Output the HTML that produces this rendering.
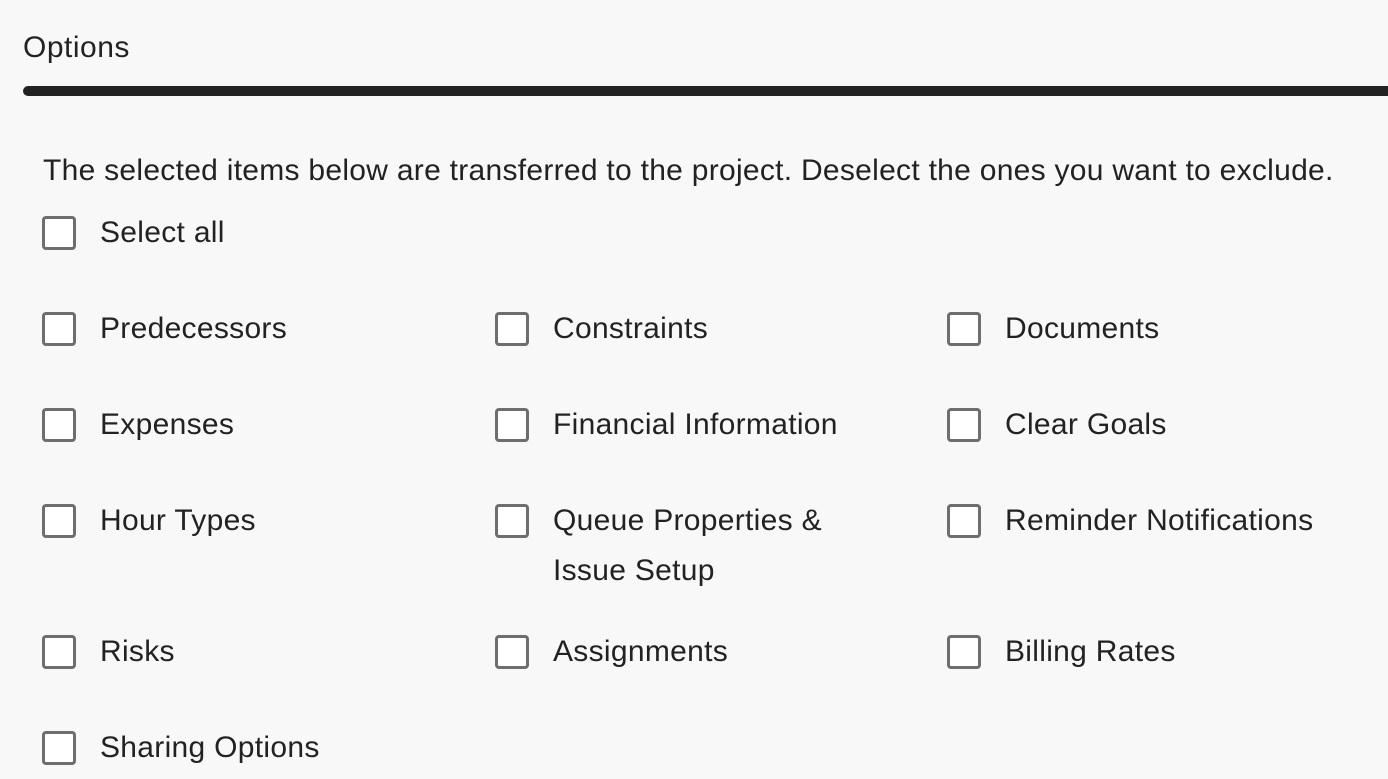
<!DOCTYPE html>
<html><head><style>
body{margin:0;width:1388px;height:779px;background:#f8f8f8;font-family:"Liberation Sans",sans-serif;color:#222;overflow:hidden;position:relative}
.t{position:absolute;font-size:30px;line-height:50px;white-space:nowrap;letter-spacing:0.3px;margin-top:1px}
.cb{position:absolute;width:28px;height:28px;border:3px solid #6e6e6e;border-radius:4px;background:#fff;box-sizing:content-box}
.bar{position:absolute;left:23px;top:86px;width:1400px;height:10px;background:#222;border-radius:5px}
</style></head><body>
<div class="t" style="left:23px;top:22px;font-size:30px;letter-spacing:0.5px">Options</div>
<div class="bar"></div>
<div class="t" style="left:43px;top:145px;letter-spacing:0.28px">The selected items below are transferred to the project. Deselect the ones you want to exclude.</div>

<div class="cb" style="left:42px;top:216px"></div><div class="t" style="left:100px;top:207px">Select all</div>

<div class="cb" style="left:42px;top:312px"></div><div class="t" style="left:100px;top:303px">Predecessors</div>
<div class="cb" style="left:495px;top:312px"></div><div class="t" style="left:553px;top:303px">Constraints</div>
<div class="cb" style="left:947px;top:312px"></div><div class="t" style="left:1005px;top:303px">Documents</div>

<div class="cb" style="left:42px;top:408px"></div><div class="t" style="left:100px;top:399px">Expenses</div>
<div class="cb" style="left:495px;top:408px"></div><div class="t" style="left:553px;top:399px">Financial Information</div>
<div class="cb" style="left:947px;top:408px"></div><div class="t" style="left:1005px;top:399px">Clear Goals</div>

<div class="cb" style="left:42px;top:504px"></div><div class="t" style="left:100px;top:495px">Hour Types</div>
<div class="cb" style="left:495px;top:504px"></div><div class="t" style="left:553px;top:495px">Queue Properties &amp;<br>Issue Setup</div>
<div class="cb" style="left:947px;top:504px"></div><div class="t" style="left:1005px;top:495px">Reminder Notifications</div>

<div class="cb" style="left:42px;top:635px"></div><div class="t" style="left:100px;top:626px">Risks</div>
<div class="cb" style="left:495px;top:635px"></div><div class="t" style="left:553px;top:626px">Assignments</div>
<div class="cb" style="left:947px;top:635px"></div><div class="t" style="left:1005px;top:626px">Billing Rates</div>

<div class="cb" style="left:42px;top:731px"></div><div class="t" style="left:100px;top:722px">Sharing Options</div>
</body></html>
